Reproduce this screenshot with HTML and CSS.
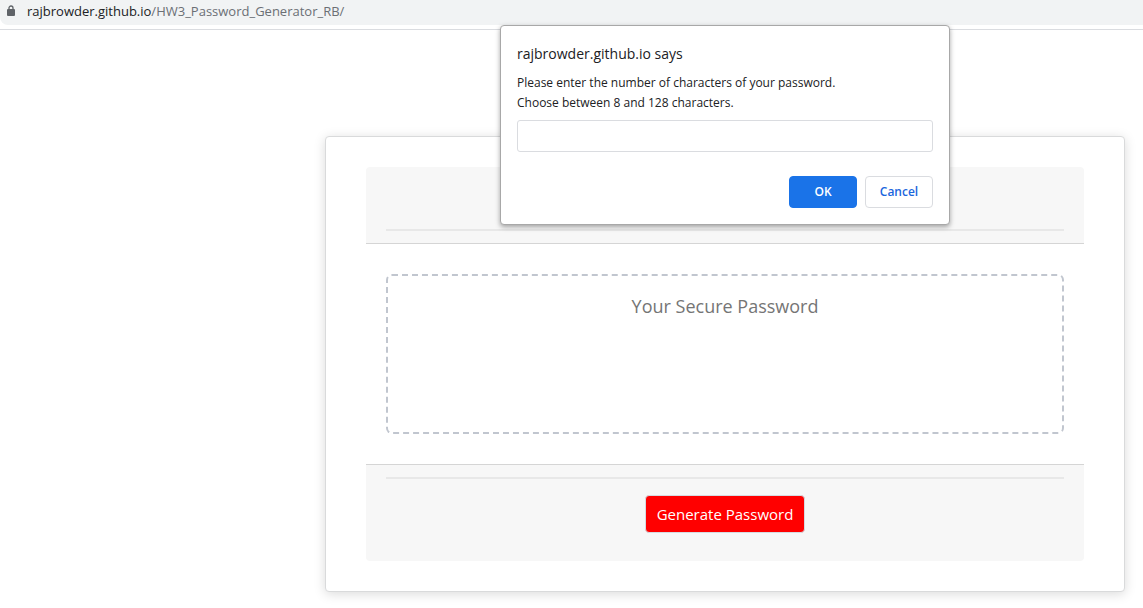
FILE: index.html
```html
<!DOCTYPE html>
<html lang="en">
<head>
<meta charset="utf-8">
<meta name="viewport" content="width=device-width, initial-scale=1">
<title>Password Generator</title>
<link rel="stylesheet" href="styles.css">
</head>
<body>
<div class="toolbar">
  <div class="address">
    <svg class="lock" viewBox="0 0 8 12" aria-hidden="true"><path d="M2 5V3a2 2 0 0 1 4 0v2" fill="none" stroke="#5f6368" stroke-width="1.3"/><rect y="4" width="8" height="7" rx="1" fill="#5f6368"/></svg>
    <span class="url"><span class="host">rajbrowder.github.io</span>/HW3_Password_Generator_RB/</span>
  </div>
</div>
<main class="stage">
  <section class="card">
    <header class="card-header"><hr class="rule"></header>
    <div class="card-body">
      <textarea class="password" placeholder="Your Secure Password" aria-label="Your Secure Password" readonly></textarea>
    </div>
    <footer class="card-footer">
      <hr class="rule">
      <button class="generate" type="button">Generate Password</button>
    </footer>
  </section>
  <form class="prompt" role="dialog" aria-labelledby="prompt-title">
    <h2 class="prompt-title" id="prompt-title">rajbrowder.github.io says</h2>
    <label class="prompt-text" for="length">Please enter the number of characters of your password.<br>Choose between 8 and 128 characters.</label>
    <input class="prompt-input" id="length" type="text">
    <div class="prompt-actions">
      <button class="action action-ok" type="button">OK</button>
      <button class="action action-cancel" type="button">Cancel</button>
    </div>
  </form>
</main>
</body>
</html>
```

FILE: styles.css
```css
* {
  box-sizing: border-box;
}

body {
  margin: 0;
  background: #fff;
  font-family: "Open Sans", "Noto Sans", sans-serif;
}

button,
input,
textarea {
  font-family: inherit;
}

.toolbar {
  height: 30px;
  border-bottom: 1px solid #dadce0;
}

.address {
  display: flex;
  align-items: center;
  gap: 12px;
  height: 25px;
  padding: 0 0 4px 7px;
  background: #f1f3f4;
  border-bottom-left-radius: 8px;
}

.lock {
  width: 8px;
  height: 12px;
}

.url {
  color: #6b6f74;
  font-size: 13px;
  line-height: 20px;
}

.host {
  color: #202124;
}

.stage {
  position: relative;
  display: flex;
  justify-content: flex-end;
  margin: 0 18px 0 307px;
  padding: 106px 0 16px;
}

.card {
  width: 100%;
  max-width: 800px;
  padding: 30px 40px;
  background: #fff;
  border: 1px solid #d9dadb;
  border-radius: 4px;
  box-shadow: 0 2px 12px rgba(0, 0, 0, 0.15);
}

.card-header,
.card-footer {
  padding: 12px 20px;
  background: #f7f7f7;
}

.card-header {
  display: flex;
  flex-direction: column;
  justify-content: flex-end;
  height: 77px;
  border-bottom: 1px solid #d5d5d5;
  border-radius: 4px 4px 0 0;
}

.card-footer {
  height: 97px;
  border-top: 1px solid #d5d5d5;
  border-radius: 0 0 4px 4px;
  text-align: center;
}

.rule {
  width: 100%;
  height: 2px;
  margin: 0;
  border: 0;
  background: #e8e8e8;
}

.card-body {
  padding: 30px 20px;
}

.password {
  display: block;
  width: 100%;
  height: 160px;
  padding: 17px 20px;
  border: 2px dashed #c1c6cf;
  border-radius: 6px;
  background: #fff;
  font-size: 18px;
  line-height: 26px;
  text-align: center;
  resize: none;
}

.password::placeholder {
  color: #757575;
}

.generate {
  height: 38px;
  margin-top: 16px;
  padding: 0 11px;
  border: 1px solid #d5dbe1;
  border-radius: 4px;
  background: #f00;
  color: #fff;
  font-size: 15px;
}

.prompt {
  position: absolute;
  top: -5px;
  left: calc(50% + 9px);
  width: 450px;
  margin-left: -225px;
  padding: 16px;
  border: 1px solid #a8a8a8;
  border-radius: 4px;
  background: #fff;
  box-shadow: 0 2px 5px rgba(0, 0, 0, 0.35);
  color: #202124;
}

.prompt-title {
  margin: 0 0 7px;
  font-size: 14px;
  font-weight: 400;
  line-height: 24px;
}

.prompt-text {
  display: block;
  font-size: 12px;
  line-height: 20px;
}

.prompt-input {
  display: block;
  width: 100%;
  height: 32px;
  margin: 7px 0 24px;
  padding: 0 8px;
  border: 1px solid #dadce0;
  border-radius: 3px;
  font-size: 12px;
}

.prompt-actions {
  display: flex;
  justify-content: flex-end;
  gap: 8px;
}

.action {
  width: 68px;
  height: 32px;
  padding: 0 0 2px;
  border: 1px solid #dadce0;
  border-radius: 4px;
  background: #fff;
  color: #1a66dd;
  font-size: 12px;
  font-weight: 600;
}

.action-ok {
  border-color: #1a73e8;
  background: #1a73e8;
  color: #fff;
}
```
